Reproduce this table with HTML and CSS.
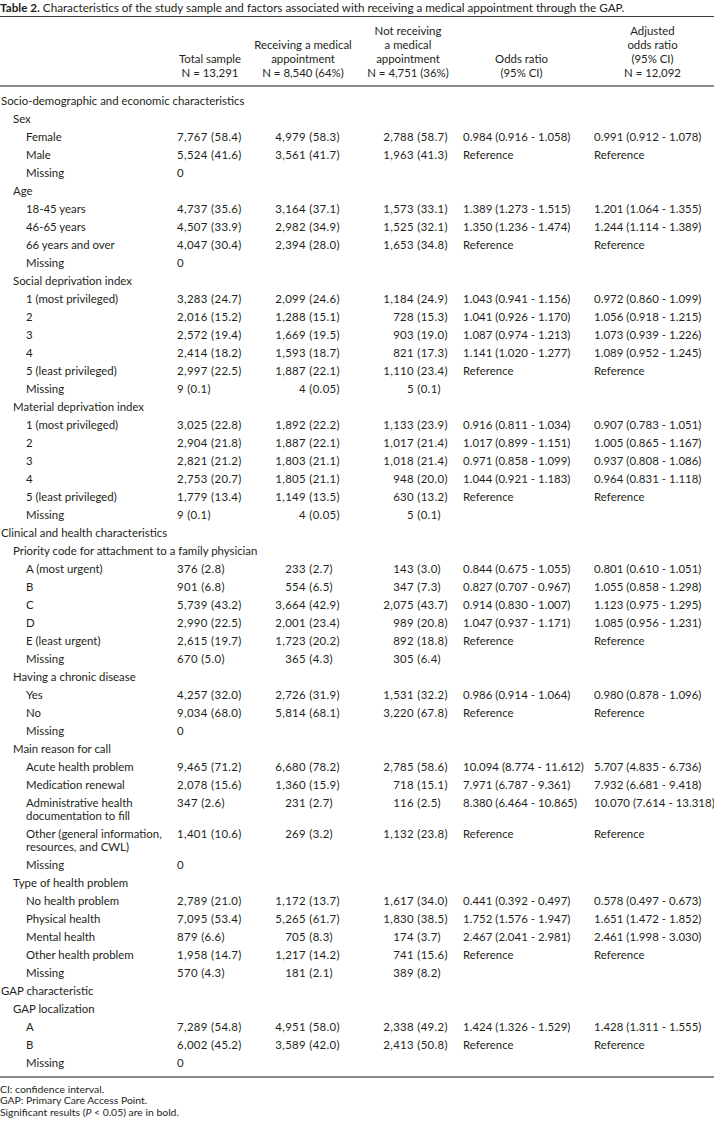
FILE: index.html
```html
<!DOCTYPE html>
<html lang="en">
<head>
<meta charset="utf-8">
<title>Table 2</title>
<link rel="stylesheet" href="styles.css">
</head>
<body>
<div class="page">
  <p class="caption"><b>Table 2.</b> Characteristics of the study sample and factors associated with receiving a medical appointment through the GAP.</p>
  <table class="data">
    <colgroup>
      <col class="c-lbl"><col class="c-tot"><col class="c-rec"><col class="c-nrec"><col class="c-or"><col class="c-aor">
    </colgroup>
    <thead>
      <tr>
        <th class="h-lbl"></th>
        <th class="h-tot">Total sample<br>N = 13,291</th>
        <th class="h-rec">Receiving a medical<br>appointment<br>N = 8,540 (64%)</th>
        <th class="h-nrec">Not receiving<br>a medical<br>appointment<br>N = 4,751 (36%)</th>
        <th class="h-or">Odds ratio<br>(95% CI)</th>
        <th class="h-aor">Adjusted<br>odds ratio<br>(95% CI)<br>N = 12,092</th>
      </tr>
    </thead>
    <tbody>
      <tr class="l0"><td colspan="6">Socio-demographic and economic characteristics</td></tr>
      <tr class="l1"><td colspan="6">Sex</td></tr>
      <tr class="l2"><td>Female</td><td class="tot">7,767 (58.4)</td><td class="rec"><span class="n">4,979</span> (58.3)</td><td class="nrec"><span class="n">2,788</span> (58.7)</td><td class="or">0.984 (0.916 - 1.058)</td><td class="aor">0.991 (0.912 - 1.078)</td></tr>
      <tr class="l2"><td>Male</td><td class="tot">5,524 (41.6)</td><td class="rec"><span class="n">3,561</span> (41.7)</td><td class="nrec"><span class="n">1,963</span> (41.3)</td><td class="or">Reference</td><td class="aor">Reference</td></tr>
      <tr class="l2"><td>Missing</td><td class="tot">0</td><td class="rec"></td><td class="nrec"></td><td class="or"></td><td class="aor"></td></tr>
      <tr class="l1"><td colspan="6">Age</td></tr>
      <tr class="l2"><td>18-45 years</td><td class="tot">4,737 (35.6)</td><td class="rec"><span class="n">3,164</span> (37.1)</td><td class="nrec"><span class="n">1,573</span> (33.1)</td><td class="or">1.389 (1.273 - 1.515)</td><td class="aor">1.201 (1.064 - 1.355)</td></tr>
      <tr class="l2"><td>46-65 years</td><td class="tot">4,507 (33.9)</td><td class="rec"><span class="n">2,982</span> (34.9)</td><td class="nrec"><span class="n">1,525</span> (32.1)</td><td class="or">1.350 (1.236 - 1.474)</td><td class="aor">1.244 (1.114 - 1.389)</td></tr>
      <tr class="l2"><td>66 years and over</td><td class="tot">4,047 (30.4)</td><td class="rec"><span class="n">2,394</span> (28.0)</td><td class="nrec"><span class="n">1,653</span> (34.8)</td><td class="or">Reference</td><td class="aor">Reference</td></tr>
      <tr class="l2"><td>Missing</td><td class="tot">0</td><td class="rec"></td><td class="nrec"></td><td class="or"></td><td class="aor"></td></tr>
      <tr class="l1"><td colspan="6">Social deprivation index</td></tr>
      <tr class="l2"><td>1 (most privileged)</td><td class="tot">3,283 (24.7)</td><td class="rec"><span class="n">2,099</span> (24.6)</td><td class="nrec"><span class="n">1,184</span> (24.9)</td><td class="or">1.043 (0.941 - 1.156)</td><td class="aor">0.972 (0.860 - 1.099)</td></tr>
      <tr class="l2"><td>2</td><td class="tot">2,016 (15.2)</td><td class="rec"><span class="n">1,288</span> (15.1)</td><td class="nrec"><span class="n">728</span> (15.3)</td><td class="or">1.041 (0.926 - 1.170)</td><td class="aor">1.056 (0.918 - 1.215)</td></tr>
      <tr class="l2"><td>3</td><td class="tot">2,572 (19.4)</td><td class="rec"><span class="n">1,669</span> (19.5)</td><td class="nrec"><span class="n">903</span> (19.0)</td><td class="or">1.087 (0.974 - 1.213)</td><td class="aor">1.073 (0.939 - 1.226)</td></tr>
      <tr class="l2"><td>4</td><td class="tot">2,414 (18.2)</td><td class="rec"><span class="n">1,593</span> (18.7)</td><td class="nrec"><span class="n">821</span> (17.3)</td><td class="or">1.141 (1.020 - 1.277)</td><td class="aor">1.089 (0.952 - 1.245)</td></tr>
      <tr class="l2"><td>5 (least privileged)</td><td class="tot">2,997 (22.5)</td><td class="rec"><span class="n">1,887</span> (22.1)</td><td class="nrec"><span class="n">1,110</span> (23.4)</td><td class="or">Reference</td><td class="aor">Reference</td></tr>
      <tr class="l2"><td>Missing</td><td class="tot">9 (0.1)</td><td class="rec"><span class="n">4</span> (0.05)</td><td class="nrec"><span class="n">5</span> (0.1)</td><td class="or"></td><td class="aor"></td></tr>
      <tr class="l1"><td colspan="6">Material deprivation index</td></tr>
      <tr class="l2"><td>1 (most privileged)</td><td class="tot">3,025 (22.8)</td><td class="rec"><span class="n">1,892</span> (22.2)</td><td class="nrec"><span class="n">1,133</span> (23.9)</td><td class="or">0.916 (0.811 - 1.034)</td><td class="aor">0.907 (0.783 - 1.051)</td></tr>
      <tr class="l2"><td>2</td><td class="tot">2,904 (21.8)</td><td class="rec"><span class="n">1,887</span> (22.1)</td><td class="nrec"><span class="n">1,017</span> (21.4)</td><td class="or">1.017 (0.899 - 1.151)</td><td class="aor">1.005 (0.865 - 1.167)</td></tr>
      <tr class="l2"><td>3</td><td class="tot">2,821 (21.2)</td><td class="rec"><span class="n">1,803</span> (21.1)</td><td class="nrec"><span class="n">1,018</span> (21.4)</td><td class="or">0.971 (0.858 - 1.099)</td><td class="aor">0.937 (0.808 - 1.086)</td></tr>
      <tr class="l2"><td>4</td><td class="tot">2,753 (20.7)</td><td class="rec"><span class="n">1,805</span> (21.1)</td><td class="nrec"><span class="n">948</span> (20.0)</td><td class="or">1.044 (0.921 - 1.183)</td><td class="aor">0.964 (0.831 - 1.118)</td></tr>
      <tr class="l2"><td>5 (least privileged)</td><td class="tot">1,779 (13.4)</td><td class="rec"><span class="n">1,149</span> (13.5)</td><td class="nrec"><span class="n">630</span> (13.2)</td><td class="or">Reference</td><td class="aor">Reference</td></tr>
      <tr class="l2"><td>Missing</td><td class="tot">9 (0.1)</td><td class="rec"><span class="n">4</span> (0.05)</td><td class="nrec"><span class="n">5</span> (0.1)</td><td class="or"></td><td class="aor"></td></tr>
      <tr class="l0"><td colspan="6">Clinical and health characteristics</td></tr>
      <tr class="l1"><td colspan="6">Priority code for attachment to a family physician</td></tr>
      <tr class="l2"><td>A (most urgent)</td><td class="tot">376 (2.8)</td><td class="rec"><span class="n">233</span> (2.7)</td><td class="nrec"><span class="n">143</span> (3.0)</td><td class="or">0.844 (0.675 - 1.055)</td><td class="aor">0.801 (0.610 - 1.051)</td></tr>
      <tr class="l2"><td>B</td><td class="tot">901 (6.8)</td><td class="rec"><span class="n">554</span> (6.5)</td><td class="nrec"><span class="n">347</span> (7.3)</td><td class="or">0.827 (0.707 - 0.967)</td><td class="aor">1.055 (0.858 - 1.298)</td></tr>
      <tr class="l2"><td>C</td><td class="tot">5,739 (43.2)</td><td class="rec"><span class="n">3,664</span> (42.9)</td><td class="nrec"><span class="n">2,075</span> (43.7)</td><td class="or">0.914 (0.830 - 1.007)</td><td class="aor">1.123 (0.975 - 1.295)</td></tr>
      <tr class="l2"><td>D</td><td class="tot">2,990 (22.5)</td><td class="rec"><span class="n">2,001</span> (23.4)</td><td class="nrec"><span class="n">989</span> (20.8)</td><td class="or">1.047 (0.937 - 1.171)</td><td class="aor">1.085 (0.956 - 1.231)</td></tr>
      <tr class="l2"><td>E (least urgent)</td><td class="tot">2,615 (19.7)</td><td class="rec"><span class="n">1,723</span> (20.2)</td><td class="nrec"><span class="n">892</span> (18.8)</td><td class="or">Reference</td><td class="aor">Reference</td></tr>
      <tr class="l2"><td>Missing</td><td class="tot">670 (5.0)</td><td class="rec"><span class="n">365</span> (4.3)</td><td class="nrec"><span class="n">305</span> (6.4)</td><td class="or"></td><td class="aor"></td></tr>
      <tr class="l1"><td colspan="6">Having a chronic disease</td></tr>
      <tr class="l2"><td>Yes</td><td class="tot">4,257 (32.0)</td><td class="rec"><span class="n">2,726</span> (31.9)</td><td class="nrec"><span class="n">1,531</span> (32.2)</td><td class="or">0.986 (0.914 - 1.064)</td><td class="aor">0.980 (0.878 - 1.096)</td></tr>
      <tr class="l2"><td>No</td><td class="tot">9,034 (68.0)</td><td class="rec"><span class="n">5,814</span> (68.1)</td><td class="nrec"><span class="n">3,220</span> (67.8)</td><td class="or">Reference</td><td class="aor">Reference</td></tr>
      <tr class="l2"><td>Missing</td><td class="tot">0</td><td class="rec"></td><td class="nrec"></td><td class="or"></td><td class="aor"></td></tr>
      <tr class="l1"><td colspan="6">Main reason for call</td></tr>
      <tr class="l2"><td>Acute health problem</td><td class="tot">9,465 (71.2)</td><td class="rec"><span class="n">6,680</span> (78.2)</td><td class="nrec"><span class="n">2,785</span> (58.6)</td><td class="or">10.094 (8.774 - 11.612)</td><td class="aor">5.707 (4.835 - 6.736)</td></tr>
      <tr class="l2"><td>Medication renewal</td><td class="tot">2,078 (15.6)</td><td class="rec"><span class="n">1,360</span> (15.9)</td><td class="nrec"><span class="n">718</span> (15.1)</td><td class="or">7.971 (6.787 - 9.361)</td><td class="aor">7.932 (6.681 - 9.418)</td></tr>
      <tr class="l2"><td>Administrative health<br>documentation to fill</td><td class="tot">347 (2.6)</td><td class="rec"><span class="n">231</span> (2.7)</td><td class="nrec"><span class="n">116</span> (2.5)</td><td class="or">8.380 (6.464 - 10.865)</td><td class="aor">10.070 (7.614 - 13.318)</td></tr>
      <tr class="l2"><td>Other (general information,<br>resources, and CWL)</td><td class="tot">1,401 (10.6)</td><td class="rec"><span class="n">269</span> (3.2)</td><td class="nrec"><span class="n">1,132</span> (23.8)</td><td class="or">Reference</td><td class="aor">Reference</td></tr>
      <tr class="l2"><td>Missing</td><td class="tot">0</td><td class="rec"></td><td class="nrec"></td><td class="or"></td><td class="aor"></td></tr>
      <tr class="l1"><td colspan="6">Type of health problem</td></tr>
      <tr class="l2"><td>No health problem</td><td class="tot">2,789 (21.0)</td><td class="rec"><span class="n">1,172</span> (13.7)</td><td class="nrec"><span class="n">1,617</span> (34.0)</td><td class="or">0.441 (0.392 - 0.497)</td><td class="aor">0.578 (0.497 - 0.673)</td></tr>
      <tr class="l2"><td>Physical health</td><td class="tot">7,095 (53.4)</td><td class="rec"><span class="n">5,265</span> (61.7)</td><td class="nrec"><span class="n">1,830</span> (38.5)</td><td class="or">1.752 (1.576 - 1.947)</td><td class="aor">1.651 (1.472 - 1.852)</td></tr>
      <tr class="l2"><td>Mental health</td><td class="tot">879 (6.6)</td><td class="rec"><span class="n">705</span> (8.3)</td><td class="nrec"><span class="n">174</span> (3.7)</td><td class="or">2.467 (2.041 - 2.981)</td><td class="aor">2.461 (1.998 - 3.030)</td></tr>
      <tr class="l2"><td>Other health problem</td><td class="tot">1,958 (14.7)</td><td class="rec"><span class="n">1,217</span> (14.2)</td><td class="nrec"><span class="n">741</span> (15.6)</td><td class="or">Reference</td><td class="aor">Reference</td></tr>
      <tr class="l2"><td>Missing</td><td class="tot">570 (4.3)</td><td class="rec"><span class="n">181</span> (2.1)</td><td class="nrec"><span class="n">389</span> (8.2)</td><td class="or"></td><td class="aor"></td></tr>
      <tr class="l0"><td colspan="6">GAP characteristic</td></tr>
      <tr class="l1"><td colspan="6">GAP localization</td></tr>
      <tr class="l2"><td>A</td><td class="tot">7,289 (54.8)</td><td class="rec"><span class="n">4,951</span> (58.0)</td><td class="nrec"><span class="n">2,338</span> (49.2)</td><td class="or">1.424 (1.326 - 1.529)</td><td class="aor">1.428 (1.311 - 1.555)</td></tr>
      <tr class="l2"><td>B</td><td class="tot">6,002 (45.2)</td><td class="rec"><span class="n">3,589</span> (42.0)</td><td class="nrec"><span class="n">2,413</span> (50.8)</td><td class="or">Reference</td><td class="aor">Reference</td></tr>
      <tr class="l2"><td>Missing</td><td class="tot">0</td><td class="rec"></td><td class="nrec"></td><td class="or"></td><td class="aor"></td></tr>
    </tbody>
  </table>
  <div class="notes">
    <p>CI: confidence interval.</p>
    <p>GAP: Primary Care Access Point.</p>
    <p>Significant results (<i>P</i> &lt; 0.05) are in bold.</p>
  </div>
</div>
</body>
</html>
```

FILE: styles.css
```css
html, body {
  margin: 0;
  padding: 0;
  background: #ffffff;
}

body {
  font-family: Lato, "Open Sans", "Liberation Sans", sans-serif;
  color: #231f20;
  font-size: 11.4px;
}

.page {
  width: 714px;
}

.caption {
  margin: 0;
  font-size: 11.7px;
  line-height: 14px;
  white-space: nowrap;
  padding-bottom: 2px;
}

.caption b {
  font-weight: 700;
}

.data {
  width: 714px;
  border-collapse: collapse;
  table-layout: fixed;
}

.c-lbl { width: 177px; }
.c-tot { width: 77px; }
.c-rec { width: 102px; }
.c-nrec { width: 104px; }
.c-or { width: 131px; }
.c-aor { width: 123px; }

.data thead th {
  font-weight: 400;
  text-align: center;
  vertical-align: bottom;
  line-height: 14px;
  padding: 7px 0 5px 0;
  white-space: nowrap;
  border-top: 1.5px solid #3c3c3c;
  border-bottom: 2px solid #8a8a8a;
}

.data thead .h-tot { padding-right: 11px; }
.data thead .h-rec { padding-right: 4px; }
.data thead .h-or { padding-right: 8px; }

.data tbody td {
  padding: 2.5px 0;
  line-height: 13px;
  white-space: nowrap;
  vertical-align: top;
  text-align: left;
}

.data tbody td.tot,
.data tbody td.rec,
.data tbody td.nrec {
  letter-spacing: 0.35px;
}

.data tbody td.or,
.data tbody td.aor {
  letter-spacing: 0.05px;
  padding-left: 3px;
}

.data tbody tr:first-child td {
  padding-top: 7px;
}

.data tbody tr:last-child td {
  padding-bottom: 6.5px;
  border-bottom: 2px solid #8a8a8a;
}

.l0 td:first-child { padding-left: 1px; }
.l1 td:first-child { padding-left: 13px; }
.l2 td:first-child { padding-left: 26px; }

.n {
  display: inline-block;
  text-align: right;
}

.rec .n { width: 52px; }
.nrec .n { width: 58px; }

.notes {
  margin-top: 6px;
  font-size: 10.4px;
  line-height: 11.7px;
}

.notes p {
  margin: 0;
}
```
